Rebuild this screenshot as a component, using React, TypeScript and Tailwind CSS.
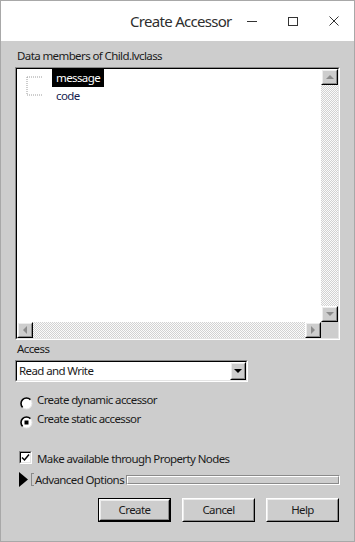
import React from 'react';

const font = "font-['Noto_Sans',sans-serif]";

// classic raised 3d frame
const Raised = ({ className = '', children }: { className?: string; children?: React.ReactNode }) => (
  <div className={`border border-t-white border-l-white border-r-black border-b-black ${className}`}>
    <div className="h-full w-full border border-t-[#ececec] border-l-[#ececec] border-r-[#8a8a8a] border-b-[#8a8a8a] bg-[#cdcdcd] flex items-center justify-center">
      {children}
    </div>
  </div>
);

// classic sunken 3d frame
const Sunken = ({ className = '', inner = '', children }: { className?: string; inner?: string; children?: React.ReactNode }) => (
  <div className={`border border-t-[#8a8a8a] border-l-[#8a8a8a] border-r-white border-b-white ${className}`}>
    <div className={`h-full w-full border border-t-black border-l-black border-r-[#e4e4e4] border-b-[#e4e4e4] ${inner}`}>{children}</div>
  </div>
);

const Arrow = ({ dir, color = '#8c8c8c' }: { dir: 'up' | 'down' | 'left' | 'right'; color?: string }) => {
  const pts = {
    up: '0,4 4,0 8,4',
    down: '0,0 8,0 4,4',
    left: '4,0 4,8 0,4',
    right: '0,0 4,4 0,8',
  }[dir];
  const vertical = dir === 'up' || dir === 'down';
  return (
    <svg width={vertical ? 8 : 4} height={vertical ? 4 : 8} viewBox={vertical ? '0 0 8 4' : '0 0 4 8'}>
      <polygon points={pts} fill={color} />
    </svg>
  );
};

const checker =
  'bg-[image:repeating-conic-gradient(#d2d2d2_0%_25%,#fbfbfb_0%_50%)] bg-[length:2px_2px]';

const Radio = ({ checked }: { checked?: boolean }) => (
  <svg width="13" height="13" viewBox="0 0 13 13">
    <circle cx="6.5" cy="6.5" r="5.5" fill="#fff" stroke="#e6e6e6" strokeWidth="1" />
    <path d="M2.6 10.4 A5.5 5.5 0 0 1 10.4 2.6" fill="none" stroke="#000" strokeWidth="1.6" />
    {checked && <rect x="4.5" y="4.5" width="4" height="4" fill="#000" />}
  </svg>
);

export default function App() {
  return (
    <div className={`${font} w-[355px] h-[542px] border border-[#a8a8a8] bg-[#cdcdcd] flex flex-col text-[11.5px] tracking-[-0.6px] text-[#1b1b1b] overflow-hidden`}>
      {/* title bar */}
      <div className="h-[40px] bg-white flex items-center shrink-0">
        <span className="ml-[129px] text-[15px] text-[#2e2e2e] tracking-[-0.7px] whitespace-nowrap">Create Accessor</span>
        <div className="flex-1" />
        <div className="w-[43px] h-full flex items-center justify-center">
          <div className="w-[10px] h-px bg-[#333]" />
        </div>
        <div className="w-[43px] h-full flex items-center justify-center">
          <div className="w-[10px] h-[9px] border border-[#333]" />
        </div>
        <div className="w-[43px] h-full flex items-center justify-center">
          <svg width="10" height="10" viewBox="0 0 10 10">
            <path d="M0.5 0.5 L9.5 9.5 M9.5 0.5 L0.5 9.5" stroke="#333" strokeWidth="1" />
          </svg>
        </div>
      </div>

      {/* body */}
      <div className="flex-1 flex flex-col px-[14px] pt-[7px]">
        <div className="h-[16px] leading-[16px] pl-[2px]">Data members of Child.lvclass</div>

        <Sunken className="mt-[3px] h-[273px]" inner="bg-white grid grid-cols-[1fr_17px] grid-rows-[1fr_16px]">
          {/* tree */}
          <div className="flex overflow-hidden">
            <svg width="35" height="40" viewBox="0 0 35 40" className="shrink-0">
              <path d="M10 8 V26 M10 8 H26 M10 26 H26" stroke="#9c9c9c" strokeWidth="1" strokeDasharray="1 1" fill="none" />
            </svg>
            <div className="flex flex-col items-start">
              <div className="h-[18px] leading-[18px] px-[4px] bg-black text-white">message</div>
              <div className="h-[18px] leading-[18px] px-[4px] text-[#15224f]">code</div>
            </div>
          </div>
          {/* vertical scrollbar */}
          <div className={`flex flex-col ${checker}`}>
            <Raised className="w-[17px] h-[16px]">
              <Arrow dir="up" />
            </Raised>
            <div className="flex-1" />
            <Raised className="w-[17px] h-[16px]">
              <Arrow dir="down" />
            </Raised>
          </div>
          {/* horizontal scrollbar */}
          <div className={`flex ${checker}`}>
            <Raised className="w-[16px] h-[16px]">
              <Arrow dir="left" />
            </Raised>
            <div className="flex-1" />
            <Raised className="w-[16px] h-[16px]">
              <Arrow dir="right" />
            </Raised>
          </div>
          <div className="bg-[#cdcdcd]" />
        </Sunken>

        <div className="mt-[1px] h-[16px] leading-[16px] pl-[2px]">Access</div>

        <Sunken className="mt-[3px] w-[233px] h-[22px]" inner="bg-white flex items-center">
          <span className="flex-1 pl-[2px]">Read and Write</span>
          <Raised className="w-[16px] h-[18px]">
            <Arrow dir="down" color="#000" />
          </Raised>
        </Sunken>

        <div className="mt-[9px] h-[18px] flex items-center">
          <div className="ml-[5px] mt-[6px]">
            <Radio />
          </div>
          <span className="ml-[4px]">Create dynamic accessor</span>
        </div>
        <div className="mt-[1px] h-[18px] flex items-center">
          <div className="ml-[5px] mt-[6px]">
            <Radio checked />
          </div>
          <span className="ml-[4px]">Create static accessor</span>
        </div>

        <div className="mt-[22px] h-[18px] flex items-center">
          <Sunken className="ml-[4px] mb-[4px] w-[13px] h-[13px]" inner="bg-white flex items-center justify-center">
            <svg width="9" height="9" viewBox="0 0 9 9">
              <path d="M1 4.5 L3.5 7 L8 1.5" stroke="#000" strokeWidth="1.5" fill="none" />
            </svg>
          </Sunken>
          <span className="ml-[5px]">Make available through Property Nodes</span>
        </div>

        <div className="mt-[4px] h-[15px] flex items-center">
          <svg width="9" height="15" viewBox="0 0 9 15" className="ml-[4px]">
            <polygon points="0,0 9,7.5 0,15" fill="#000" />
          </svg>
          <div className="ml-[3px] w-[3px] h-[13px] border-l border-y border-l-[#8a8a8a] border-y-[#8a8a8a]" />
          <span className="ml-[1px] whitespace-nowrap">Advanced Options</span>
          <div className="ml-[2px] flex-1 h-[10px] border border-t-[#8a8a8a] border-l-[#8a8a8a] border-r-white border-b-white">
            <div className="h-full border border-t-white border-l-white border-r-[#8a8a8a] border-b-[#8a8a8a]" />
          </div>
        </div>

        <div className="mt-[11px] flex justify-end gap-[11px] mr-[1px]">
          <div className="border border-black">
            <Raised className="w-[71px] h-[22px]">
              <span>Create</span>
            </Raised>
          </div>
          <Raised className="w-[73px] h-[24px]">
            <span>Cancel</span>
          </Raised>
          <Raised className="w-[73px] h-[24px]">
            <span>Help</span>
          </Raised>
        </div>
      </div>
    </div>
  );
}
